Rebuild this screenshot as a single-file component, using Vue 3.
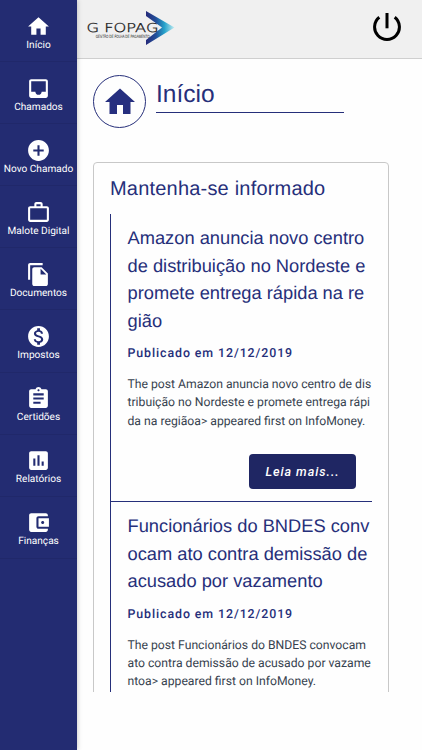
<template>
  <div class="page">
    <nav class="sidebar">
      <a v-for="item in menu" :key="item.label" class="menu-item">
        <svg class="menu-icon" viewBox="0 0 24 24">
          <path :d="item.icon" />
        </svg>
        <span class="menu-label">{{ item.label }}</span>
      </a>
    </nav>

    <div class="main">
      <header class="topbar">
        <svg class="logo" viewBox="0 0 90 38">
          <defs>
            <linearGradient id="arrow" x1="0" y1="0" x2="1" y2="0">
              <stop offset="0" stop-color="#262a7a" />
              <stop offset="0.35" stop-color="#22509a" />
              <stop offset="0.65" stop-color="#27a3cb" />
              <stop offset="1" stop-color="#c4edf2" />
            </linearGradient>
          </defs>
          <path fill="url(#arrow)" d="M59 2 87.5 18.5 59 36V31L75 18.5 59 7Z" />
          <text class="logo-name" x="-0.5" y="23.3" textLength="72" lengthAdjust="spacingAndGlyphs">G FOPAG</text>
          <text class="logo-sub" x="8.7" y="29" textLength="54" lengthAdjust="spacingAndGlyphs">GESTÃO DE FOLHA DE PAGAMENTO</text>
        </svg>
        <svg class="power" viewBox="0 0 28 28">
          <path d="M14 0V15.3" />
          <path d="M6.3 4.3A12.4 12.4 0 1 0 21.7 4.3" />
        </svg>
      </header>

      <section class="heading">
        <div class="heading-badge">
          <svg viewBox="0 0 24 24">
            <path :d="menu[0].icon" />
          </svg>
        </div>
        <h1 class="heading-title">Início</h1>
      </section>

      <div class="content">
        <div class="card">
          <h2 class="card-title">Mantenha-se informado</h2>
          <div class="feed">
            <article v-for="post in posts" :key="post.id" class="post">
              <h3 class="post-title">
                <span v-for="line in post.title" :key="line" class="line">{{ line }}</span>
              </h3>
              <p class="post-date">Publicado em {{ post.date }}</p>
              <p class="post-text">
                <span v-for="line in post.text" :key="line" class="line">{{ line }}</span>
              </p>
              <button v-if="post.more" class="post-more">{{ post.more }}</button>
            </article>
          </div>
        </div>
      </div>
    </div>
  </div>
</template>

<script setup>
const menu = [
  { label: 'Início', icon: 'M10 20v-6h4v6h5v-8h3L12 3 2 12h3v8z' },
  {
    label: 'Chamados',
    icon: 'M19 3H5c-1.1 0-2 .9-2 2v14c0 1.1.9 2 2 2h14c1.1 0 2-.9 2-2V5c0-1.1-.9-2-2-2zm0 12h-4c0 1.66-1.35 3-3 3s-3-1.34-3-3H5V5h14v10z',
  },
  {
    label: 'Novo Chamado',
    icon: 'M12 2C6.48 2 2 6.48 2 12s4.48 10 10 10 10-4.48 10-10S17.52 2 12 2zm5 11h-4v4h-2v-4H7v-2h4V7h2v4h4v2z',
  },
  {
    label: 'Malote Digital',
    icon: 'M14 6V4h-4v2h4zM4 8v11h16V8H4zm16-2c1.11 0 2 .89 2 2v11c0 1.11-.89 2-2 2H4c-1.11 0-2-.89-2-2V8c0-1.11.89-2 2-2h4V4c0-1.11.89-2 2-2h4c1.11 0 2 .89 2 2v2h4z',
  },
  {
    label: 'Documentos',
    icon: 'M16 1H4c-1.1 0-2 .9-2 2v14h2V3h12V1zm-1 4l6 6v10c0 1.1-.9 2-2 2H7.99C6.89 23 6 22.1 6 21l.01-14c0-1.1.89-2 1.99-2h7zm-1 7h5.5L14 6.5V12z',
  },
  {
    label: 'Impostos',
    icon: 'M12 2C6.48 2 2 6.48 2 12s4.48 10 10 10 10-4.48 10-10S17.52 2 12 2zm1.41 16.09V20h-2.67v-1.93c-1.71-.36-3.16-1.46-3.27-3.4h1.96c.1 1.05.82 1.87 2.65 1.87 1.96 0 2.4-.98 2.4-1.59 0-.83-.44-1.61-2.67-2.14-2.48-.6-4.18-1.62-4.18-3.67 0-1.72 1.39-2.84 3.11-3.21V4h2.67v1.95c1.86.45 2.79 1.86 2.85 3.39H14.3c-.05-1.11-.64-1.87-2.22-1.87-1.5 0-2.4.68-2.4 1.64 0 .84.65 1.39 2.67 1.91s4.18 1.39 4.18 3.91c-.01 1.83-1.38 2.83-3.12 3.16z',
  },
  {
    label: 'Certidões',
    icon: 'M19 3h-4.18C14.4 1.84 13.3 1 12 1c-1.3 0-2.4.84-2.82 2H5c-1.1 0-2 .9-2 2v14c0 1.1.9 2 2 2h14c1.1 0 2-.9 2-2V5c0-1.1-.9-2-2-2zm-7 0c.55 0 1 .45 1 1s-.45 1-1 1-1-.45-1-1 .45-1 1-1zm2 14H7v-2h7v2zm3-4H7v-2h10v2zm0-4H7V7h10v2z',
  },
  {
    label: 'Relatórios',
    icon: 'M19 3H5c-1.1 0-2 .9-2 2v14c0 1.1.9 2 2 2h14c1.1 0 2-.9 2-2V5c0-1.1-.9-2-2-2zM9 17H7v-7h2v7zm4 0h-2V7h2v10zm4 0h-2v-4h2v4z',
  },
  {
    label: 'Finanças',
    icon: 'M21 18v1c0 1.1-.9 2-2 2H5c-1.11 0-2-.9-2-2V5c0-1.1.89-2 2-2h14c1.1 0 2 .9 2 2v1h-9c-1.11 0-2 .9-2 2v8c0 1.1.89 2 2 2h9zm-9-2h10V8H12v8zm4-2.5c-.83 0-1.5-.67-1.5-1.5s.67-1.5 1.5-1.5 1.5.67 1.5 1.5-.67 1.5-1.5 1.5z',
  },
];

const posts = [
  {
    id: 1,
    title: ['Amazon anuncia novo centro', 'de distribuição no Nordeste e', 'promete entrega rápida na re', 'gião'],
    date: '12/12/2019',
    text: [
      'The post Amazon anuncia novo centro de dis',
      'tribuição no Nordeste e promete entrega rápi',
      'da na regiãoa> appeared first on InfoMoney.',
    ],
    more: 'Leia mais...',
  },
  {
    id: 2,
    title: ['Funcionários do BNDES conv', 'ocam ato contra demissão de', 'acusado por vazamento'],
    date: '12/12/2019',
    text: [
      'The post Funcionários do BNDES convocam',
      'ato contra demissão de acusado por vazame',
      'ntoa> appeared first on InfoMoney.',
    ],
  },
];
</script>

<style>
body {
  background: #fefefe;
}
</style>

<style scoped>
.page {
  display: flex;
  height: 750px;
  overflow: hidden;
  font-family: Roboto, sans-serif;
  text-rendering: geometricPrecision;
  color: #262f7a;
}

.sidebar {
  z-index: 1;
  flex: 0 0 77px;
  background: #232c72;
  box-shadow: 0 0 5px rgba(0, 0, 0, 0.25);
}

.menu-item {
  display: flex;
  flex-direction: column;
  align-items: center;
  box-sizing: border-box;
  height: 62.1px;
  padding-top: 13.5px;
  border-bottom: 1px solid #20286a;
}

.menu-icon {
  width: 25px;
  height: 25px;
  fill: #fff;
}

.menu-label {
  font-size: 10.1px;
  line-height: 14px;
  white-space: nowrap;
  color: #fff;
}

.main {
  flex: 1;
  min-width: 0;
}

.topbar {
  display: flex;
  justify-content: space-between;
  align-items: flex-start;
  box-sizing: border-box;
  height: 59px;
  padding: 9px 20px 0 10px;
  background: #f0f0f0;
  border-bottom: 1px solid #cfcfcf;
}

.logo {
  width: 90px;
  height: 38px;
}

.logo-name {
  font-family: 'DejaVu Sans', sans-serif;
  font-size: 12.2px;
  font-weight: 200;
  fill: #222;
  stroke: #222;
  stroke-width: 0.3px;
}

.logo-sub {
  font-family: 'Liberation Sans', sans-serif;
  font-size: 4.6px;
  fill: #222;
}

.power {
  width: 28px;
  height: 28px;
  margin-top: 4px;
  margin-right: 1px;
  fill: none;
  stroke: #000;
  stroke-width: 3px;
}

.heading {
  display: flex;
  height: 103px;
  box-sizing: border-box;
  padding: 16px 0 0 16px;
}

.heading-badge {
  display: flex;
  align-items: center;
  justify-content: center;
  box-sizing: border-box;
  width: 53px;
  height: 53px;
  border: 1px solid #262f7a;
  border-radius: 50%;
}

.heading-badge svg {
  width: 36px;
  height: 36px;
  fill: #262f7f;
}

.heading-title {
  box-sizing: border-box;
  width: 188px;
  height: 38px;
  margin: 0 0 0 10px;
  border-bottom: 1px solid #262f7a;
  font-family: 'Liberation Sans', sans-serif;
  font-size: 24.5px;
  font-weight: 400;
  line-height: 39px;
}

.content {
  height: 530px;
  overflow: hidden;
  padding: 0 33px 0 16px;
}

.card {
  padding: 12px 16px 0;
  border: 1px solid #c8c8c8;
  border-radius: 4px;
}

.card-title {
  margin: 0 0 11px;
  font-family: 'Liberation Sans', sans-serif;
  font-size: 20px;
  font-weight: 400;
  line-height: 28px;
  letter-spacing: 0.2px;
  white-space: nowrap;
}

.feed {
  min-height: 500px;
  border-left: 1px solid #262f7a;
}

.post {
  display: flex;
  flex-direction: column;
  padding: 10px 0 12px 16.5px;
}

.post + .post {
  padding-top: 10.5px;
  border-top: 1px solid #262f7a;
}

.line {
  display: block;
  white-space: nowrap;
}

.post-title {
  margin: 0;
  font-family: 'Liberation Sans', sans-serif;
  font-size: 18.3px;
  font-weight: 400;
  line-height: 27.5px;
}

.post-date {
  margin: 10.2px 0 0;
  font-size: 12.4px;
  font-weight: 500;
  line-height: 20px;
  letter-spacing: 0.9px;
}

.post-text {
  margin: 10.8px 0 0;
  font-size: 12.2px;
  line-height: 18.3px;
  color: #37424f;
}

.post-more {
  align-self: flex-end;
  width: 107px;
  height: 35px;
  margin: 24px 16px 0 0;
  padding: 0;
  border: 0;
  border-radius: 4px;
  background: #1f2663;
  color: #fff;
  font-family: Roboto, sans-serif;
  font-size: 12.6px;
  font-style: italic;
  font-weight: 500;
  letter-spacing: 0.95px;
}
</style>
